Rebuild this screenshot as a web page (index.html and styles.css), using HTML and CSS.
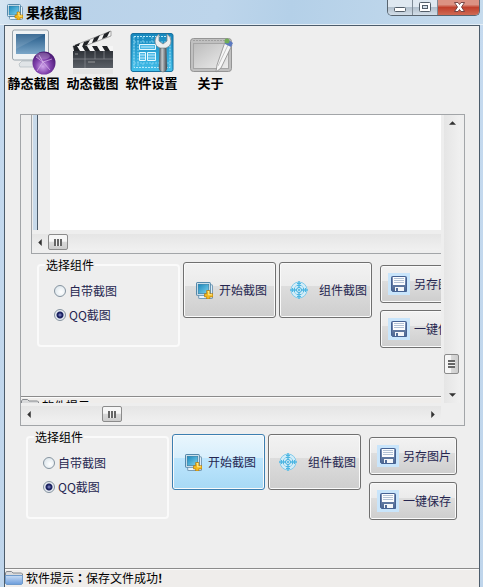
FILE: index.html
```html
<!DOCTYPE html>
<html lang="zh-CN">
<head>
<meta charset="utf-8">
<meta name="viewport" content="width=device-width">
<title>果核截图</title>
<link rel="stylesheet" href="styles.css">
</head>
<body>
<svg class="defs" aria-hidden="true">
  <defs>
    <linearGradient id="screen" x1="0" y1="0" x2="1" y2="1"><stop offset="0" stop-color="#1a87bb"/><stop offset="1" stop-color="#7fd3ee"/></linearGradient>
    <linearGradient id="steel" x1="0" y1="0" x2="0" y2="1"><stop offset="0" stop-color="#245a88"/><stop offset="1" stop-color="#7aa6c8"/></linearGradient>
    <radialGradient id="orb" cx="0.45" cy="0.65" r="0.65"><stop offset="0" stop-color="#d2a6ec"/><stop offset="0.5" stop-color="#8142ad"/><stop offset="1" stop-color="#45156e"/></radialGradient>
    <linearGradient id="plan" x1="0" y1="0" x2="0" y2="1"><stop offset="0" stop-color="#1687bd"/><stop offset="1" stop-color="#43bfea"/></linearGradient>
    <linearGradient id="handle" x1="0" y1="0" x2="1" y2="0"><stop offset="0" stop-color="#4a5258"/><stop offset="0.4" stop-color="#c4c9cc"/><stop offset="1" stop-color="#3b4248"/></linearGradient>
    <linearGradient id="slate" x1="0" y1="0" x2="0" y2="1"><stop offset="0" stop-color="#30343a"/><stop offset="1" stop-color="#5a5f66"/></linearGradient>
    <linearGradient id="tablet" x1="0" y1="0" x2="1" y2="1"><stop offset="0" stop-color="#bcbcbc"/><stop offset="1" stop-color="#ededed"/></linearGradient>
    <linearGradient id="folderFront" x1="0" y1="0" x2="0" y2="1"><stop offset="0" stop-color="#c8dcf4"/><stop offset="1" stop-color="#6b9cdb"/></linearGradient>
    <linearGradient id="disk" x1="0" y1="0" x2="0" y2="1"><stop offset="0" stop-color="#8094b8"/><stop offset="1" stop-color="#4b6691"/></linearGradient>
  </defs>
  <symbol id="i-capture" viewBox="0 0 16 16">
    <rect x="2.5" y="2.5" width="13" height="13" rx="1" fill="#e6f3fa" stroke="#789db8"/>
    <rect x=".5" y=".5" width="13" height="12" rx="1" fill="#f3fafd" stroke="#5588aa"/>
    <rect x="2" y="2" width="10" height="9" fill="url(#screen)" stroke="#32779c" stroke-width=".6"/>
    <path d="M10 8h3v3h3v3h-3v2h-3v-2H8v-3h2z" fill="#f4b91d" stroke="#a87312" stroke-width=".6"/>
    <path d="M11 9h1v3h3" fill="none" stroke="#ffed8b"/>
  </symbol>
  <symbol id="i-target" viewBox="0 0 18 18">
    <circle cx="9" cy="9" r="8" fill="#d3edf8" stroke="#83cbea"/>
    <circle cx="9" cy="9" r="5" fill="none" stroke="#8ed0ec"/>
    <path d="M9 0v18M0 9h18" stroke="#55bbe5" stroke-width="1.4"/>
    <path d="M2.500 7v4M4.500 7v4M13.500 7v4M15.500 7v4M7 2.500h4M7 4.500h4M7 13.500h4M7 15.500h4" stroke="#4db5e1"/>
    <circle cx="9" cy="9" r="2.500" fill="#d3edf8" stroke="#3facdc"/>
    <circle cx="9" cy="9" r="1" fill="#3facdc"/>
  </symbol>
  <symbol id="i-save" viewBox="0 0 22 22">
    <path d="M0 0h22v22H0z" fill="#c9e5fb"/>
    <path d="M3.500 4.500q0-1 1-1h13q1 0 1 1v14h-14l-1-1z" fill="url(#disk)" stroke="#456192"/>
    <path d="M5 4h12v8H5z" fill="#fcfdfe"/>
    <path d="M6 5.500h10M6 7.500h10M6 9.500h10" stroke="#b3c2d5"/>
    <path d="M7 14h9v4H7z" fill="#f4f6f8"/>
    <path d="M8 15h2v3H8z" fill="#526d99"/>
  </symbol>
  <symbol id="i-folder" viewBox="0 0 18 14">
    <path d="M.5 12V2l1-1.500h5L8 2h8.500l1 1v9z" fill="#d9dadb" stroke="#85888d"/>
    <path d="M.5 4.500h17v8l-1 1h-15l-1-1z" fill="url(#folderFront)" stroke="#6e9acb"/>
  </symbol>
</svg>

<div class="window">
  <header class="titlebar">
    <svg class="title-icon"><use href="#i-capture"/></svg>
    <h1>果核截图</h1>
    <div class="window-buttons">
      <button type="button" class="wb" aria-label="最小化"><svg viewBox="0 0 24 15"><rect x="6.500" y="7.500" width="11" height="4" rx="1" fill="#fff" stroke="#535e69"/></svg></button>
      <button type="button" class="wb" aria-label="最大化"><svg viewBox="0 0 24 15"><rect x="6.500" y="2.500" width="11" height="9" rx="1" fill="#fff" stroke="#535e69"/><rect x="9.500" y="5.500" width="5" height="3" fill="#d5dfe8" stroke="#535e69"/></svg></button>
      <button type="button" class="wb wb-close" aria-label="关闭"><svg viewBox="0 0 24 15"><path d="M7.500 2.500h3.500l1.500 2 1.500-2h3.500l-3 4.500 3 4.500H14l-1.500-2-1.500 2H7.500l3-4.500z" fill="#fff" stroke="#6b3a3a" stroke-width=".9"/></svg></button>
    </div>
  </header>

  <main class="client">
    <nav class="toolbar">
      <button type="button" class="tool">
        <svg viewBox="0 0 44 46">
          <path d="M10 32h16l4 3-2 3H8l-1-3z" fill="#e0e4e7" stroke="#aab3b9" stroke-width=".6"/>
          <path d="M.5 3q0-2 2-2h32q2 0 2 2v26q0 2-2 2h-32q-2 0-2-2z" fill="#eef2f4" stroke="#8f9ba4" stroke-width=".9"/>
          <path d="M4 5h29v20H4z" fill="url(#steel)"/><path d="M4 5h29L4 20z" fill="#fff" opacity=".12"/>
          <circle cx="32" cy="34" r="11.500" fill="url(#orb)"/>
          <path d="M24 28l7 5 9-3M31 33l-6 9M31 33l7 8M27 26l4 7" fill="none" stroke="#e3c3f4" stroke-width=".8" opacity=".8"/>
          <ellipse cx="31" cy="27" rx="7" ry="3.500" fill="#fff" opacity=".22"/>
        </svg><span>静态截图</span></button>
      <button type="button" class="tool">
        <svg viewBox="0 0 44 46">
          <path d="M2 17L40 2v5L3 21z" fill="#f5f5f5" stroke="#555" stroke-width=".5"/>
          <path d="M4 16l5-2-2 5-4 2zM13 13l6-2-3 5-5 2zM23 9l6-3-3 6-5 2zM33 5l6-3-3 6-5 2z" fill="#202327"/>
          <path d="M2 17h40v5H2z" fill="#f5f5f5"/>
          <path d="M2 17h4l3 5H3zM11 17h5l3 5h-5zM21 17h5l3 5h-5zM31 17h5l3 5h-5z" fill="#202327"/>
          <path d="M2 22h40v17H2z" fill="url(#slate)"/>
          <path d="M14 22v17M2 30h40M24 22v8M33 22v8" stroke="#898e94" stroke-width=".7"/>
          <path d="M4 25h3M17 33h7" stroke="#aaa" stroke-width=".8"/>
          <path d="M2 40h40v5H2z" fill="#e4e4e4"/>
        </svg><span>动态截图</span></button>
      <button type="button" class="tool">
        <svg viewBox="0 0 44 46">
          <rect x="1" y="4.500" width="42" height="38" rx="2" fill="url(#plan)" stroke="#16709e"/>
          <rect x="4" y="7.500" width="36" height="31" fill="none" stroke="#b4e9fb" stroke-dasharray="2 1"/>
          <path d="M4 13h36M4 34h36M8 8v30M13 8v5M22 8v5M13 34v4M22 34v4" stroke="#92dbf6" stroke-width=".8" stroke-dasharray="2 1"/>
          <path d="M9.500 15.500h16v5h-16zM9.500 23.500h6v8h-6zM17.500 23.500h8v8h-8z" fill="#4db9e6" stroke="#e1f8ff"/>
          <path d="M11 18h13M10 26h5M10 29h5M18 26h7M18 29h7" stroke="#e1f8ff" stroke-width=".8"/>
          <path d="M29 5q-4 3-4 7 0 5 5 7v7h6v-7q5-2 5-7 0-4-4-7v7l-4 3-4-3z" fill="#eceeef" stroke="#80898f" stroke-width=".8"/>
          <path d="M30 19h6l1 20q-.5 4-4 4t-4-4z" fill="url(#handle)" stroke="#555d63" stroke-width=".5"/>
        </svg><span>软件设置</span></button>
      <button type="button" class="tool">
        <svg viewBox="0 0 44 46">
          <rect x="1.500" y="9.500" width="41" height="33" rx="3" fill="#c0c0c0" stroke="#959595"/>
          <rect x="4.500" y="14.500" width="35" height="25" fill="url(#tablet)" stroke="#a5a5a5"/>
          <path d="M4 11.500h34" stroke="#9f9f9f" stroke-dasharray="2 1"/>
          <path d="M36 13l7 3-11 23-5 4 1-7z" fill="#f6f6f6" stroke="#8a8a8a" stroke-width=".8"/>
          <path d="M39 16L29 37" stroke="#c2c2c2"/>
          <path d="M36 12q4-2 8 2l-2 4-6-3z" fill="#5b79c0"/><circle cx="38" cy="12" r="2.500" fill="#71ad58"/>
        </svg><span>关于</span></button>
    </nav>

    <section class="preview" aria-label="截图预览">
      <div class="viewport">
        <div class="nested">
          <div class="canvas"><div class="paper"></div></div>
          <div class="hbar">
            <button type="button" class="arrow" aria-label="向左"><svg viewBox="0 0 6 8"><path d="M5 0v8L1 4z"/></svg></button>
            <span class="thumb"></span><span class="rest"></span>
          </div>
        </div>
        <div class="controls">
          <fieldset class="choice">
            <legend>选择组件</legend>
            <label><input type="radio" name="shot-part"><span>自带截图</span></label>
            <label><input type="radio" name="shot-part" checked><span>QQ截图</span></label>
          </fieldset>
          <button type="button" class="big"><svg class="ic16"><use href="#i-capture"/></svg>开始截图</button>
          <button type="button" class="big"><svg class="ic18"><use href="#i-target"/></svg>组件截图</button>
          <div class="stack">
            <button type="button" class="small"><svg class="ic22"><use href="#i-save"/></svg>另存图片</button>
            <button type="button" class="small"><svg class="ic22"><use href="#i-save"/></svg>一键保存</button>
          </div>
        </div>
        <div class="status"><svg class="folder"><use href="#i-folder"/></svg><span>软件提示</span></div>
      </div>
      <div class="vbar">
        <button type="button" class="arrow" aria-label="向上"><svg viewBox="0 0 8 6"><path d="M0 5h8L4 1z"/></svg></button>
        <span class="rest"></span><span class="thumb thumb-v"></span><span class="tail"></span>
        <button type="button" class="arrow" aria-label="向下"><svg viewBox="0 0 8 6"><path d="M0 1h8L4 5z"/></svg></button>
      </div>
      <div class="hbar hbar-outer">
        <button type="button" class="arrow" aria-label="向左"><svg viewBox="0 0 6 8"><path d="M5 0v8L1 4z"/></svg></button>
        <span class="lead"></span><span class="thumb"></span><span class="rest"></span>
        <button type="button" class="arrow" aria-label="向右"><svg viewBox="0 0 6 8"><path d="M1 0v8l4-4z"/></svg></button>
      </div>
    </section>

    <div class="controls controls-main">
      <fieldset class="choice">
        <legend>选择组件</legend>
        <label><input type="radio" name="part"><span>自带截图</span></label>
        <label><input type="radio" name="part" checked><span>QQ截图</span></label>
      </fieldset>
      <button type="button" class="big hot"><svg class="ic16"><use href="#i-capture"/></svg>开始截图</button>
      <button type="button" class="big"><svg class="ic18"><use href="#i-target"/></svg>组件截图</button>
      <div class="stack">
        <button type="button" class="small"><svg class="ic22"><use href="#i-save"/></svg>另存图片</button>
        <button type="button" class="small"><svg class="ic22"><use href="#i-save"/></svg>一键保存</button>
      </div>
    </div>

    <footer class="status status-main"><svg class="folder"><use href="#i-folder"/></svg><span>软件提示<b class="colon" lang="zh-TW">：</b>保存文件成功<b>!</b></span></footer>
  </main>
</div>
</body>
</html>
```
FILE: styles.css
```css
* { box-sizing: border-box; }
body {
  margin: 0;
  font: 12px/16px "Noto Sans CJK SC", sans-serif;
  color: #000;
}
button {
  font: inherit;
  color: inherit;
  margin: 0;
  padding: 0;
  border: 0;
  background: none;
  white-space: nowrap;
}
svg { display: block; flex: none; }
.defs { position: absolute; width: 0; height: 0; }

.window {
  display: flex;
  flex-direction: column;
  min-height: 100vh;
  padding: 0 3px 0 4px;
  background: linear-gradient(#c5daef, #bfd5eb);
}

/* title bar */
.titlebar {
  display: flex;
  align-items: center;
  height: 25px;
  margin: 0 -3px 0 -4px;
  padding: 0 3px 0 7px;
  background: linear-gradient(100deg, #d6e5f2 0, #b9d2e9 12%, #bdd5eb 45%, #b4d0e8 60%, #c6dbed 100%);
  border-bottom: 1px solid #e4eef6;
}
.title-icon { width: 16px; height: 16px; }
h1 { margin: 0 0 0 3px; font-size: 14px; line-height: 20px; font-weight: 700; }
.window-buttons {
  display: flex;
  align-self: flex-start;
  height: 16px;
  margin-left: auto;
  border: 1px solid #58646f;
  border-top: 0;
  border-radius: 0 0 5px 5px;
  overflow: hidden;
}
.wb {
  display: flex;
  justify-content: center;
  width: 25px;
  border-right: 1px solid #7f8b96;
  background: linear-gradient(#dfe8f0 0 45%, #b2c0cd 50%, #d3dee8);
}
.wb svg { width: 24px; height: 15px; }
.wb-close {
  width: 41px;
  border-right: 0;
  background: linear-gradient(#dc9283 0 30%, #c1402c 50%, #cf6a54);
}

/* client area */
.client {
  flex: 1;
  display: flex;
  flex-direction: column;
  background: #eee;
  border: 1px solid #4c5c6b;
  border-bottom: 0;
}
.toolbar { display: flex; margin-left: -1px; padding-top: 3px; }
.tool {
  display: flex;
  flex-direction: column;
  align-items: center;
  width: 59px;
  font-size: 13px;
  font-weight: 700;
  line-height: 16px;
}
.tool svg { width: 44px; height: 46px; }

/* preview pane */
.preview {
  display: grid;
  grid-template-columns: 1fr 23px;
  grid-template-rows: 288px 22px;
  margin: 23px 14px 0 15px;
  border: 1px solid #a2a5a8;
}
.viewport { min-width: 0; overflow: hidden; }
.nested {
  margin-left: 10px;
  padding-bottom: 3px;
  border: solid #a2a5a8;
  border-width: 0 0 1px 1px;
}
.canvas {
  margin-left: 1px;
  padding-left: 13px;
  border-left: 4px solid #c8daea;
  box-shadow: inset 1px 0 #4c5c6b;
}
.paper { height: 115px; background: #fff; }
.nested .hbar { margin-top: 4px; }

.hbar {
  display: flex;
  height: 16px;
  background: linear-gradient(#e5e5e5, #f0f0f0);
}
.vbar {
  display: flex;
  flex-direction: column;
  width: 16px;
  margin-left: 3px;
  background: linear-gradient(90deg, #e5e5e5, #f0f0f0);
}
.hbar-outer { align-self: center; }
.arrow {
  display: flex;
  align-items: center;
  justify-content: center;
  width: 16px;
  height: 16px;
}
.arrow svg { width: 6px; height: 7px; fill: #333; }
.vbar .arrow svg { width: 7px; height: 6px; }
.rest { flex: 1; }
.lead { width: 65px; }
.tail { height: 13px; }
.thumb {
  display: flex;
  align-items: center;
  justify-content: center;
  flex: none;
  width: 20px;
  height: 16px;
  border: 1px solid #8b8b8b;
  border-radius: 2px;
  background: linear-gradient(#f6f6f6 0 45%, #d9d9d9 50%, #cdcdcd);
}
.thumb::before {
  content: "";
  width: 8px;
  height: 7px;
  background: repeating-linear-gradient(90deg, #666 0 2px, #f2f2f2 2px 3px);
}
.thumb-v {
  width: 15px;
  height: 20px;
  background: linear-gradient(90deg, #f6f6f6 0 45%, #d9d9d9 50%, #cdcdcd);
}
.thumb-v::before {
  width: 7px;
  height: 8px;
  background: repeating-linear-gradient(#666 0 2px, #f2f2f2 2px 3px);
}

/* option and action row */
.controls {
  display: flex;
  align-items: flex-start;
  margin: 3px 0 48px 16px;
  color: #262650;
}
.controls-main { margin-left: 21px; }
.choice {
  flex: none;
  width: 143px;
  height: 90px;
  min-width: 0;
  margin: 0 3px 0 0;
  padding: 6px 15px 0;
  border: 2px solid #fafafa;
  border-radius: 4px;
  outline: 1px solid #e0e5e9;
  outline: 0;
}
.choice legend { margin-left: -9px; padding: 0 1px; color: #000; }
.choice label { display: flex; align-items: center; gap: 3px; height: 24px; }
.choice input {
  appearance: none;
  width: 12px;
  height: 12px;
  margin: 0;
  border: 1px solid #85939f;
  border-radius: 50%;
  background: radial-gradient(circle at 60% 60%, #fff, #d3dfe7);
}
.choice input:checked {
  background: radial-gradient(circle, #6970b0 0 1px, #1d2462 2px 3px, #e8edf2 4px);
}

.big, .small {
  display: flex;
  flex: none;
  align-items: center;
  border: 1px solid #707070;
  border-radius: 3px;
  box-shadow: inset 0 0 0 1px #fafafa;
  background: linear-gradient(#f2f2f2, #ebebeb 42%, #dddddd 43%, #cecece);
}
.big {
  justify-content: space-between;
  width: 93px;
  height: 56px;
  margin: 5px 3px 0 0;
  padding: 0 8px 0 12px;
}
.big + .big { padding: 0 4px 0 10px; margin-right: 8px; }
.hot {
  border-color: #3c7fb1;
  background: linear-gradient(#e9f6fd, #d8effc 42%, #bee6fd 43%, #a7d9f5);
}
.stack { display: grid; gap: 7px; margin-top: 8px; }
.small {
  gap: 4px;
  width: 88px;
  height: 38px;
  padding-left: 7px;
}
.ic16 { width: 17px; height: 17px; }
.ic18 { width: 18px; height: 18px; }
.ic22 { width: 22px; height: 22px; }

/* status line */
.status {
  display: flex;
  align-items: center;
  gap: 3px;
  height: 19px;
  border-top: 1px solid #8b8b8b;
  box-shadow: inset 0 1px #fbfbfb;
  background: #efedeb;
}
.status-main { margin-top: auto; }
.folder { width: 18px; height: 14px; }
.colon { font-family: "Noto Sans CJK TC", sans-serif; }
```
